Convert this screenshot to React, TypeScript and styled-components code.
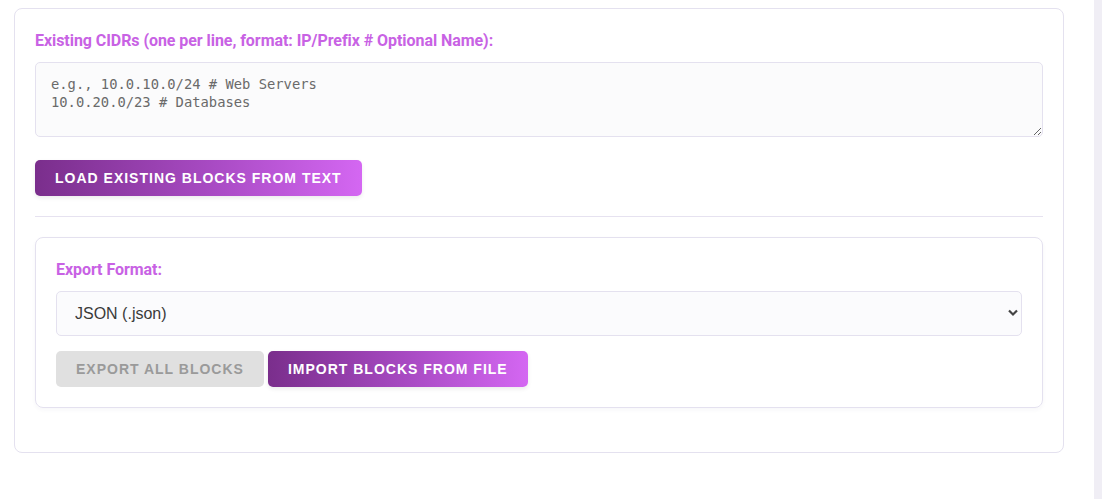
import styled, { createGlobalStyle } from "styled-components";

const GlobalStyle = createGlobalStyle`
html, body {
    margin: 0;
    padding: 0;
    background: #ffffff;
}
body {
    font-family: Roboto, "Liberation Sans", Arial, sans-serif;
}
`;

const Page = styled.div`
display: flex;
min-height: 499px;
`;

const Main = styled.main`
flex: 1;
padding: 8px 30px 0 14px;
`;

const Scrollbar = styled.div`
width: 8px;
background: #f0eef5;
`;

const Card = styled.section`
border: 1px solid #e4e1ef;
border-radius: 8px;
padding: 22px 20px 20px;
background: #fff;
`;

const Panel = styled.div`
border: 1px solid #e4e1ef;
border-radius: 8px;
padding: 22px 20px 20px;
margin-bottom: 24px;
box-shadow: 0 2px 4px rgba(60, 40, 90, 0.04);
`;

const Label = styled.label`
display: block;
font-family: Roboto, sans-serif;
font-weight: 700;
font-size: 16px;
color: #c862e4;
margin-bottom: 12px;
letter-spacing: -0.06px;
`;

const TextArea = styled.textarea`
display: block;
box-sizing: border-box;
width: 100%;
height: 75px;
padding: 12px 15px;
border: 1px solid #e4e1ef;
border-radius: 5px;
background: #fbfbfc;
font-family: "DejaVu Sans Mono", "Liberation Mono", monospace;
font-size: 13.8px;
line-height: 18px;
color: #555;
margin-bottom: 23px;
&::placeholder {
    color: #6a6a6a;
}
`;

const Divider = styled.hr`
border: none;
border-top: 1px solid #e6e2f0;
margin: 20px 0;
`;

const SelectWrap = styled.div`
position: relative;
margin-bottom: 15px;
`;

const Select = styled.select`
display: block;
box-sizing: border-box;
width: 100%;
height: 45px;
padding: 0 18px;
appearance: none;
border: 1px solid #e4e1ef;
border-radius: 5px;
background: #fbfbfd;
font-family: "Liberation Sans", Arial, sans-serif;
font-size: 16px;
color: #3a3a3a;
`;

const Chevron = styled.svg`
position: absolute;
right: 3px;
top: 18px;
pointer-events: none;
`;

const ButtonRow = styled.div`
display: flex;
gap: 4px;
`;

const Button = styled.button<{ $disabled?: boolean }>`
height: 36px;
padding: 0 20px;
border: none;
border-radius: 5px;
font-family: "Liberation Sans", Arial, sans-serif;
font-weight: 700;
font-size: 14px;
letter-spacing: 1px;
text-transform: uppercase;
color: ${p => (p.$disabled ? "#9a9a9a" : "#ffffff")};
background: ${p => (p.$disabled ? "#e0e0e0" : "linear-gradient(90deg, #7a2e8c 0%, #a94bc4 55%, #d467f2 100%)")};
box-shadow: ${p => (p.$disabled ? "none" : "0 2px 4px rgba(0,0,0,0.08)")};
cursor: ${p => (p.$disabled ? "default" : "pointer")};
`;

function App() {
    return (
        <Page>
            <GlobalStyle />
            <Main>
                <Card>
                    <Label htmlFor="cidrs">Existing CIDRs (one per line, format: IP/Prefix # Optional Name):</Label>
                    <TextArea
                        id="cidrs"
                        placeholder={"e.g., 10.0.10.0/24 # Web Servers\n10.0.20.0/23 # Databases"}
                    />
                    <Button>Load Existing Blocks From Text</Button>
                    <Divider />
                    <Panel>
                        <Label htmlFor="format">Export Format:</Label>
                        <SelectWrap>
                            <Select id="format" defaultValue="json">
                                <option value="json">JSON (.json)</option>
                                <option value="csv">CSV (.csv)</option>
                            </Select>
                            <Chevron width="12" height="8" viewBox="0 0 12 8">
                                <path d="M2 1.5 L6 5.5 L10 1.5" fill="none" stroke="#444" strokeWidth="2.2" />
                            </Chevron>
                        </SelectWrap>
                        <ButtonRow>
                            <Button $disabled disabled>Export All Blocks</Button>
                            <Button>Import Blocks From File</Button>
                        </ButtonRow>
                    </Panel>
                </Card>
            </Main>
            <Scrollbar />
        </Page>
    );
}

export default App;
